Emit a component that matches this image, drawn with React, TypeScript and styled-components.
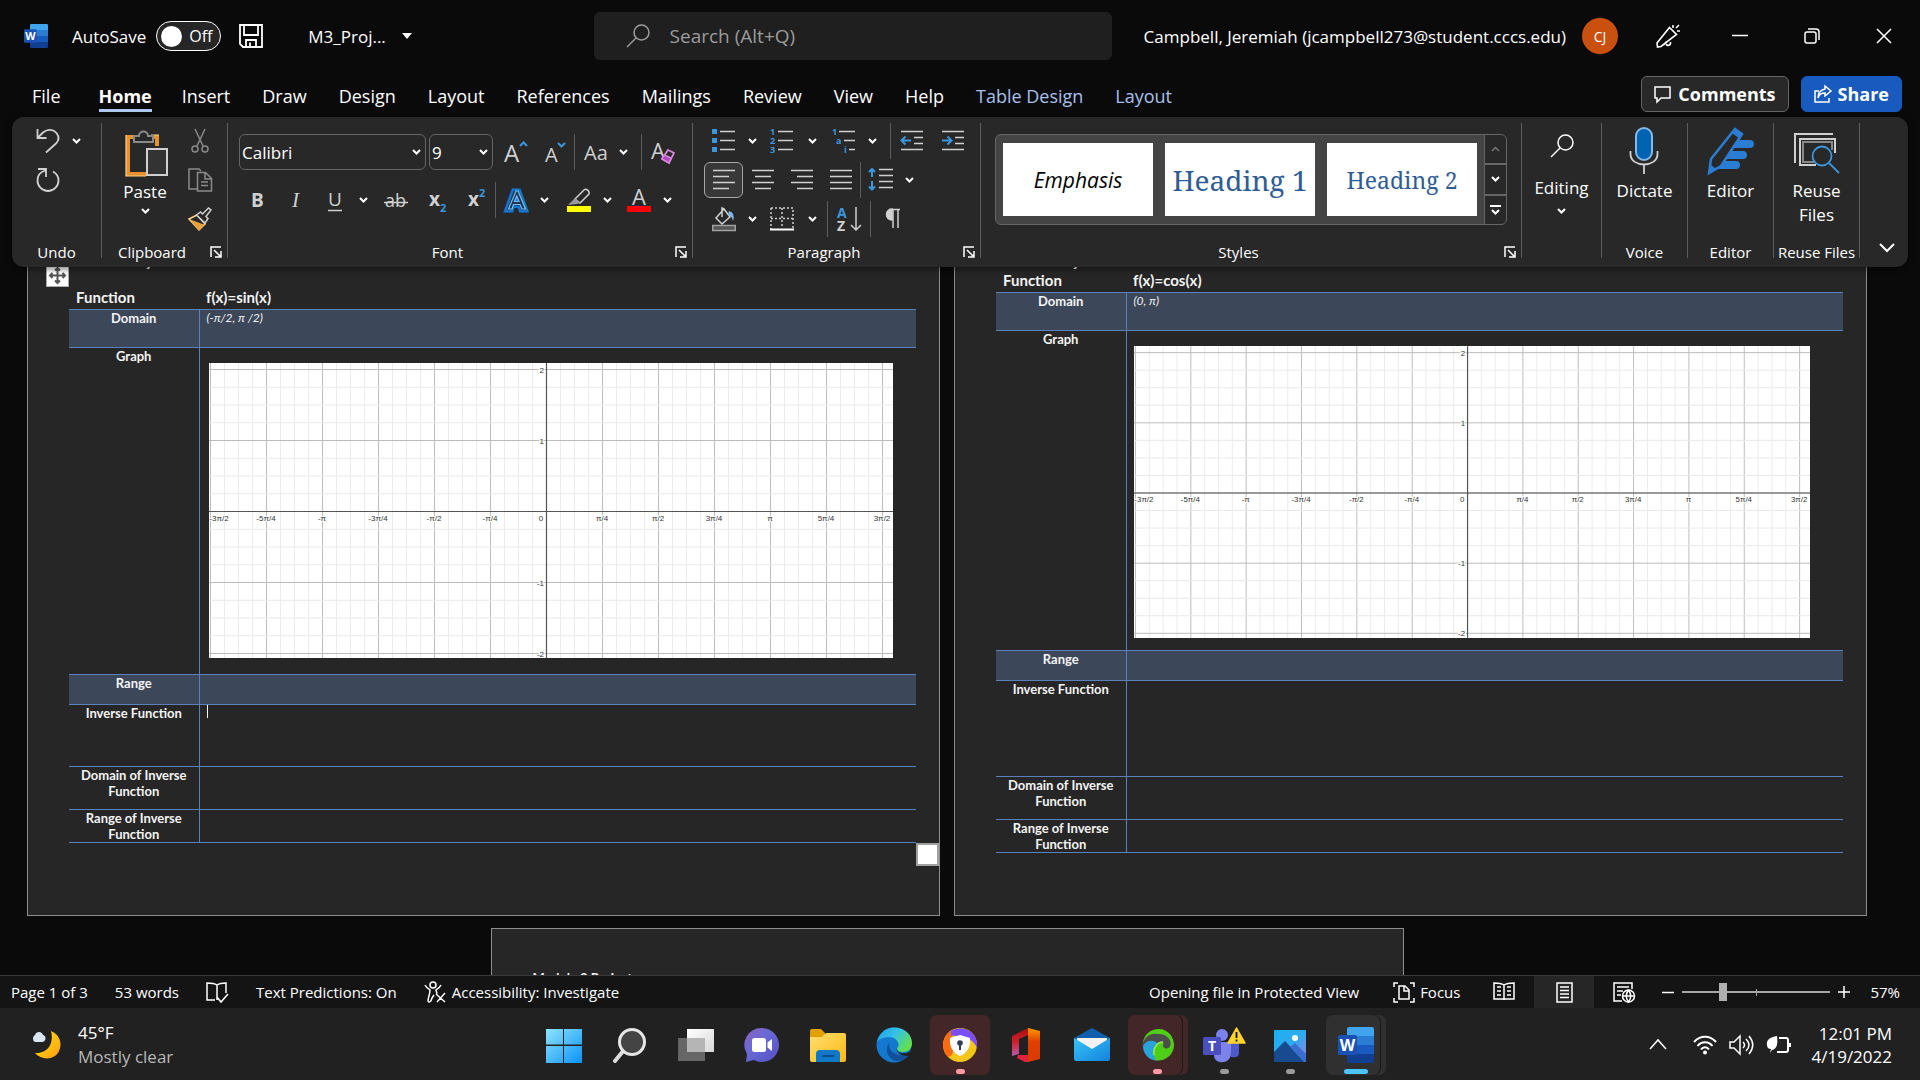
import React from "react";
import styled, { createGlobalStyle, css } from "styled-components";

const GlobalStyle = createGlobalStyle`
  *, *::before, *::after { box-sizing: border-box; }
  html, body { margin: 0; height: 100%; background: #0a0a0a; overflow: hidden; }
  body, button, input, select { font-family: "Open Sans", "Noto Sans", sans-serif; }
  button, input, select { margin: 0; color: inherit; }
`;

/* ---------- shell ---------- */

const Shell = styled.div`
  display: flex;
  flex-direction: column;
  height: 100vh;
  color: #fff;
  background: #0a0a0a;
  font-size: 17px;
`;

const plainButton = css`
  display: inline-flex;
  align-items: center;
  justify-content: center;
  padding: 0;
  border: 0;
  background: transparent;
  color: inherit;
`;

/* ---------- title bar ---------- */

const TitleBar = styled.header`
  display: grid;
  grid-template-columns: minmax(0, 29fr) minmax(0, 518px) minmax(max-content, 40fr);
  column-gap: 32px;
  align-items: center;
  flex: none;
  height: 72px;
`;

const TitleLeft = styled.div`
  display: flex;
  align-items: center;
  padding-left: 24px;
  white-space: nowrap;
`;

const AutoSave = styled.label`
  display: flex;
  align-items: center;
  gap: 10px;
  margin-left: 24px;
`;

const Toggle = styled.button`
  ${plainButton}
  justify-content: flex-start;
  gap: 7px;
  width: 65px;
  height: 30px;
  padding-left: 4px;
  border: 1px solid #fff;
  border-radius: 15px;
  background: #262626;
  font-size: 16px;
  &::before {
    content: "";
    width: 21px;
    height: 21px;
    border-radius: 50%;
    background: #fff;
  }
`;

const BareButton = styled.button`
  ${plainButton}
  height: 36px;
`;

const SaveButton = styled(BareButton)`
  margin: 0 45px 0 18px;
`;

const FileName = styled(BareButton)`
  gap: 16px;
  font-size: 17px;
`;

const SearchBox = styled.label`
  display: flex;
  align-items: center;
  gap: 20px;
  height: 48px;
  padding: 0 32px;
  border-radius: 6px;
  background: #1f1f1f;
  color: #9c9c9c;
`;

const SearchInput = styled.input`
  flex: 1;
  min-width: 0;
  padding: 0;
  border: 0;
  outline: 0;
  background: transparent;
  font-size: 19px;
  &::placeholder { color: #9c9c9c; opacity: 1; }
`;

const TitleRight = styled.div`
  display: flex;
  align-items: center;
  white-space: nowrap;
`;

const Avatar = styled.span`
  display: grid;
  flex: none;
  place-items: center;
  width: 36px;
  height: 36px;
  margin: 0 14px 0 16px;
  border-radius: 50%;
  background: #ca5010;
  font-size: 14px;
`;

const WindowButtons = styled.div`
  display: flex;
  margin-left: auto;
`;

const WindowButton = styled(BareButton)`
  width: 72px;
`;

/* ---------- tabs ---------- */

const TabBar = styled.nav`
  display: flex;
  align-items: flex-start;
  flex: none;
  height: 45px;
  padding: 4px 18px 0 16px;
`;

const Tab = styled.button<{ $active?: boolean; $contextual?: boolean }>`
  ${plainButton}
  height: 36px;
  padding: 3px 16px 0;
  font-size: 18px;
  white-space: nowrap;
  color: ${(p) => (p.$contextual ? "#a9c0ea" : "#fff")};
  ${(p) =>
    p.$active &&
    css`
      margin: 0 14px 0 22px;
      padding: 6px 0 0;
      font-weight: 700;
      border-bottom: 3px solid #aec8f2;
    `}
`;

const TabActions = styled.div`
  display: flex;
  gap: 12px;
  margin-left: auto;
`;

const ActionButton = styled.button<{ $primary?: boolean }>`
  ${plainButton}
  gap: 6px;
  height: 36px;
  padding: 0 12px;
  border: 1px solid ${(p) => (p.$primary ? "#185abd" : "#666")};
  border-radius: 6px;
  background: ${(p) => (p.$primary ? "#185abd" : "#282828")};
  font-size: 18px;
  font-weight: 700;
`;

/* ---------- ribbon ---------- */

const Ribbon = styled.section`
  position: relative;
  z-index: 1;
  display: flex;
  flex: none;
  height: 150px;
  margin: 0 12px;
  padding: 6px 0 9px;
  border-radius: 12px;
  background: #282828;
  box-shadow: 0 2px 6px rgba(0, 0, 0, 0.5);
`;

const Group = styled.div<{ $w?: number }>`
  display: flex;
  flex-direction: column;
  flex: ${(p) => (p.$w ? `0 0 ${p.$w}px` : "1 1 0")};
  min-width: 0;
  border-right: 1px solid #5c5c5c;
`;

const GroupBody = styled.div`
  display: flex;
  flex: 1;
  min-height: 0;
  justify-content: center;
`;

const GroupFooter = styled.div<{ $launch?: boolean }>`
  display: grid;
  grid-template-columns: minmax(0, 1fr) ${(p) => (p.$launch ? "20px" : "")};
  align-items: center;
  justify-items: center;
  height: 12px;
  padding-right: ${(p) => (p.$launch ? 5 : 0)}px;
  font-size: 15px;
  line-height: 12px;
  white-space: nowrap;
`;

const Launcher = styled.button`
  ${plainButton}
  justify-self: end;
  width: 12px;
  height: 12px;
`;

const ToolRows = styled.div`
  display: flex;
  flex-direction: column;
  flex: 1;
  gap: 3px;
`;

const ToolRow = styled.div<{ $start?: number }>`
  display: flex;
  align-items: center;
  height: 36px;
  padding-left: ${(p) => p.$start ?? 11}px;
`;

const Tool = styled.button<{ $w?: number; $on?: boolean; $gap?: number }>`
  ${plainButton}
  flex: none;
  width: ${(p) => p.$w ?? 39}px;
  height: 36px;
  margin-left: ${(p) => p.$gap ?? 0}px;
  color: #d0d0d0;
  ${(p) =>
    p.$on &&
    css`
      border: 1px solid #a6a6a6;
      border-radius: 6px;
      background: #383838;
    `}
`;

const ChevButton = styled.button`
  ${plainButton}
  flex: none;
  width: 18px;
  height: 36px;
`;

const Rule = styled.span<{ $gap?: number }>`
  flex: none;
  width: 1px;
  height: 36px;
  margin-left: ${(p) => p.$gap ?? 0}px;
  background: #5c5c5c;
`;

const FontRows = styled(ToolRows)`
  gap: 12px;
  padding-top: 11px;
`;

const Combo = styled.label<{ $w: number }>`
  position: relative;
  flex: none;
  width: ${(p) => p.$w}px;
  height: 36px;
  margin-right: 3px;
  svg { position: absolute; right: 5px; top: 15px; pointer-events: none; }
`;

const Select = styled.select`
  appearance: none;
  width: 100%;
  height: 100%;
  padding: 0 2px;
  border: 1px solid #666;
  border-radius: 6px;
  background: #282828;
  font-size: 17px;
`;

const PasteButton = styled.button`
  ${plainButton}
  flex-direction: column;
  justify-content: flex-start;
  width: 70px;
  padding-top: 7px;
  font-size: 17px;
  line-height: 24px;
  gap: 4px;
`;

const ClipTools = styled.div`
  display: flex;
  flex-direction: column;
  gap: 3px;
  width: 39px;
`;

const BigTool = styled.button`
  ${plainButton}
  flex-direction: column;
  justify-content: flex-start;
  align-self: flex-start;
  padding-top: 4px;
  font-size: 17px;
  line-height: 24px;
  gap: 4px;
`;

const EditingTool = styled(BigTool)`
  padding-top: 11px;
  gap: 8px;
  svg + span { margin-top: 10px; }
`;

const Gallery = styled.div`
  display: flex;
  flex: 1;
  height: 91px;
  margin: 11px 14px 0;
  border: 1px solid #666;
  border-radius: 6px;
  background: #444;
  overflow: hidden;
`;

const Tiles = styled.div`
  display: grid;
  grid-template-columns: repeat(3, minmax(0, 1fr));
  gap: 12px;
  flex: 1;
  padding: 8px 7px;
`;

const Tile = styled.button<{ $kind: "emphasis" | "h1" | "h2" }>`
  ${plainButton}
  background: #fff;
  white-space: nowrap;
  ${(p) =>
    p.$kind === "emphasis"
      ? css`
          color: #000;
          font: italic 21px "Open Sans", sans-serif;
        `
      : css`
          color: #2f5c94;
          font-family: "Noto Serif", "Liberation Serif", serif;
          font-size: ${p.$kind === "h1" ? 28 : 23}px;
        `}
`;

const GalleryScroll = styled.div`
  display: grid;
  grid-template-rows: repeat(3, 1fr);
  gap: 2px;
  width: 22px;
  border-left: 1px solid #666;
  background: #666;
`;

const ScrollButton = styled.button`
  ${plainButton}
  background: #282828;
`;

const Collapse = styled.button`
  ${plainButton}
  align-self: flex-end;
  width: 48px;
  height: 22px;
  padding-left: 6px;
`;

/* ---------- document ---------- */

const Workspace = styled.main`
  display: flex;
  flex-direction: column;
  flex: 1;
  min-height: 0;
  gap: 12px;
  padding-right: 26px;
  overflow: hidden;
  align-items: center;
  font-family: "Lato", "Open Sans", sans-serif;
  font-size: 13px;
  line-height: 16px;
  color: #f4f4f4;
`;

/* The first spread is scrolled partly under the ribbon. */
const Spread = styled.div`
  display: flex;
  flex: none;
  gap: 14px;
  margin-top: -14px;
`;

const Page = styled.article<{ $last?: boolean }>`
  flex: none;
  width: 913px;
  height: 663px;
  padding: ${(p) => (p.$last ? 40 : 0)}px 23px 0 41px;
  border: 1px solid #8c8c8c;
  border-top-width: ${(p) => (p.$last ? 1 : 0)}px;
  background: #262626;
`;

const PageTitle = styled.h1`
  margin: 0;
  font-size: 13px;
  line-height: 18px;
  font-weight: 700;
`;

const TableWrap = styled.div<{ $gap: number }>`
  position: relative;
  margin-top: ${(p) => p.$gap}px;
`;

const Sheet = styled.table`
  width: 847px;
  table-layout: fixed;
  border-collapse: collapse;
`;

const Row = styled.tr<{ $h: number; $shade?: boolean }>`
  height: ${(p) => p.$h}px;
  background: ${(p) => (p.$shade ? "#3c475a" : "transparent")};
  border-bottom: 1px solid #5a80bd;
`;

const cell = css`
  padding: 0 7px;
  vertical-align: top;
`;

const HeadCell = styled.th<{ $first?: boolean }>`
  ${cell}
  width: ${(p) => (p.$first ? "130px" : "auto")};
  text-align: left;
  font-size: 15px;
  font-weight: 700;
`;

const NameCell = styled.th`
  ${cell}
  text-align: center;
  font-weight: 700;
  border-right: 1px solid #5a80bd;
`;

const DataCell = styled.td`
  ${cell}
  font-size: 12px;
  font-style: italic;
`;

const GraphBox = styled.div<{ $inset: number }>`
  padding: 15px 0 0 ${(p) => p.$inset}px;
  font-style: normal;
  svg { display: block; background: #fff; overflow: hidden; }
`;

const Caret = styled.span`
  display: block;
  width: 1px;
  height: 13px;
  background: #fff;
`;

const MoveHandle = styled.span`
  position: absolute;
  left: -23px;
  top: -25px;
  display: grid;
  place-items: center;
  width: 23px;
  height: 23px;
  border: 1px solid #aaa;
  background: #fff;
`;

const SizeHandle = styled.span`
  position: absolute;
  left: 847px;
  bottom: -23px;
  width: 23px;
  height: 23px;
  border: 2px solid #a0a0a0;
  background: #fff;
`;

/* ---------- status bar ---------- */

const StatusBar = styled.footer`
  display: flex;
  align-items: center;
  flex: none;
  height: 33px;
  padding: 0 20px 0 11px;
  border-top: 1px solid #3a3a3a;
  background: #141414;
  font-size: 15px;
  white-space: nowrap;
`;

const StatusItem = styled.button<{ $gap?: number }>`
  ${plainButton}
  gap: 5px;
  height: 32px;
  margin-right: ${(p) => p.$gap ?? 27}px;
  font-size: 15px;
`;

const Spacer = styled.span`
  flex: 1;
`;

const ViewButton = styled.button<{ $on?: boolean }>`
  ${plainButton}
  width: 60px;
  height: 32px;
  background: ${(p) => (p.$on ? "#262626" : "transparent")};
`;

const ZoomRange = styled.input`
  appearance: none;
  width: 148px;
  height: 18px;
  margin: 0 8px;
  background:
    linear-gradient(#a8a8a8, #a8a8a8) center / 1px 7px no-repeat,
    linear-gradient(#a8a8a8, #a8a8a8) center / 100% 2px no-repeat;
  &::-webkit-slider-thumb {
    appearance: none;
    width: 8px;
    height: 18px;
    background: #b0b0b0;
  }
`;

/* ---------- taskbar ---------- */

const Taskbar = styled.footer`
  display: grid;
  grid-template-columns: 1fr auto 1fr;
  align-items: center;
  flex: none;
  height: 72px;
  padding-top: 1px;
  background: #212121;
`;

const Weather = styled.button`
  ${plainButton}
  justify-self: start;
  gap: 14px;
  padding-left: 30px;
  font-size: 17px;
  line-height: 24px;
  text-align: left;
`;

const Lines = styled.span`
  display: flex;
  flex-direction: column;
`;

const Muted = styled.span`
  color: #b8b8b8;
`;

const Apps = styled.div`
  display: flex;
  gap: 6px;
`;

const AppButton = styled.button<{ $tint?: string; $stack?: boolean; $dot?: string; $wide?: boolean }>`
  ${plainButton}
  position: relative;
  width: ${(p) => (p.$stack ? 54 : 60)}px;
  margin-right: ${(p) => (p.$stack ? 6 : 0)}px;
  padding-left: ${(p) => (p.$stack ? 6 : 0)}px;
  height: 60px;
  border-radius: 7px;
  background: ${(p) => p.$tint ?? "transparent"};
  ${(p) =>
    p.$stack &&
    css`
      box-shadow: 1px 0 0 #191919, 6px 0 0 ${p.$tint};
    `}
  ${(p) =>
    p.$dot &&
    css`
      &::after {
        content: "";
        position: absolute;
        left: 50%;
        bottom: 1px;
        width: ${p.$wide ? 24 : 9}px;
        height: 5px;
        margin-left: ${p.$wide ? -9 : p.$stack ? -2 : -4}px;
        border-radius: 3px;
        background: ${p.$dot};
      }
    `}
`;

const Tray = styled.div`
  display: flex;
  align-items: center;
  justify-self: end;
  gap: 12px;
  padding-right: 28px;
`;

const TrayToggle = styled(BareButton)`
  margin-right: 14px;
`;

const Clock = styled.button`
  ${plainButton}
  margin-left: 8px;
  font-size: 17px;
  line-height: 23px;
  text-align: right;
`;

/* ---------- icons ---------- */

const Drawing = styled.svg`
  flex: none;
  overflow: visible;
`;

const Defs = styled.svg`
  position: absolute;
`;

type IconProps = { w?: number; h?: number; vb?: string; sw?: number; children: React.ReactNode };
const Icon = ({ w = 24, h = 24, vb, sw = 1.5, children }: IconProps) => (
  <Drawing width={w} height={h} viewBox={vb ?? `0 0 ${w} ${h}`} fill="none" stroke="currentColor" strokeWidth={sw} aria-hidden="true">
    {children}
  </Drawing>
);

const BLUE = "#3a96dd";
const FONT = '"Open Sans", "Noto Sans", sans-serif';

const Chev = () => (
  <Icon w={9} h={6} sw={2}>
    <path d="M1 1l3.500 3.500L8 1" stroke="#fff" />
  </Icon>
);

const Chevron = ({ label }: { label: string }) => (
  <ChevButton aria-label={label}>
    <Chev />
  </ChevButton>
);

const LaunchIcon = () => (
  <Icon w={12} h={12} sw={1.5}>
    <path d="M1 11V1h10M4 4l6.500 6.500M11 5v6H5" stroke="#fff" />
  </Icon>
);

const WordIcon = ({ size }: { size: number }) => (
  <svg width={size} height={size} viewBox="0 0 36 36" aria-hidden="true">
    <path d="M9 2a2 2 0 0 1 2-2h23a2 2 0 0 1 2 2v7H9z" fill="#41a5ee" />
    <path d="M9 9h27v9H9z" fill="#2b7cd3" />
    <path d="M9 18h27v9H9z" fill="#185abd" />
    <path d="M9 27h27v7a2 2 0 0 1-2 2H11a2 2 0 0 1-2-2z" fill="#103f91" />
    <rect x="0" y="8" width="19" height="20" rx="1.500" fill="#1a52b3" />
    <text x="9.500" y="24" textAnchor="middle" fontFamily={FONT} fontWeight="700" fontSize="16" fill="#fff">W</text>
  </svg>
);

const SaveIcon = () => (
  <Icon sw={1.8}>
    <path d="M1 1h22v22H4l-3-3zM5 1v10h14V1M7 23v-7h10v7M11 18.500v4.500" stroke="#fff" />
  </Icon>
);

const SearchIcon = () => (
  <Icon>
    <circle cx="15.500" cy="8.500" r="7.500" />
    <path d="M10 14L1 23" />
  </Icon>
);

const PenIcon = () => (
  <Icon sw={1.6}>
    <path d="M13.500 3.500l7 7L5 22.500l-3.500.500L1 19zM7.500 21l3-3.500M10 20c1.500 2.500 5 1.500 4.500-2M17 1v3M23 1l-3 3M21 7h3" stroke="#fff" />
  </Icon>
);

const UndoIcon = () => (
  <Icon sw={1.8}>
    <path d="M1.500 0v9h9M1.500 9l5.500-5.500C12 -.5 17.500.500 20.500 4c3 4 2 8-.5 10.500L10 23.500" />
  </Icon>
);

const RedoIcon = () => (
  <Icon sw={1.8}>
    <path d="M2 1h8v8M9.500 2.500C4 4 1.500 8 1.500 12.500a10.500 10.500 0 0 0 21 0c0-4-2-7-5.500-9" />
  </Icon>
);

const PasteIcon = () => (
  <Icon w={46} h={46} vb="-4 0 46 46">
    <path d="M8 7H2v37h18M25 7h6v9" stroke="#e8912d" strokeWidth="4" />
    <path d="M0 5v41h20M25 5h8" stroke="#fbd58a" strokeWidth="1.200" />
    <path d="M8 12V6h5c0-6 9-6 9 0h5v6z" fill="#282828" stroke="#8a8a8a" strokeWidth="2" />
    <rect x="21" y="19" width="20" height="26" fill="#333" stroke="#d0d0d0" strokeWidth="2" />
  </Icon>
);

const CutIcon = () => (
  <Icon w={18} h={24}>
    <g stroke="#8a8a8a">
      <path d="M4 0l8 17M14 0L6 17" />
      <circle cx="4" cy="20" r="3" />
      <circle cx="14" cy="20" r="3" />
    </g>
  </Icon>
);

const CopyIcon = () => (
  <Icon>
    <g stroke="#8a8a8a">
      <path d="M9 21H1V1h10l2 2" />
      <path d="M9.500 4.500h8l6 6V23h-14zM17 5v6h6M13 14h7M13 17.500h7" />
    </g>
  </Icon>
);

const PainterIcon = () => (
  <Icon>
    <path d="M1 12l8-4 8 9-6 6z" fill="#282828" stroke="#fbd58a" />
    <path d="M4 14l11 4-4 4.500z" fill="#e8a33d" stroke="#e8a33d" />
    <path d="M8.500 8l4-3 2 2 6-6 2.500 2-5 6.500 2 2-3 4.500z" fill="#282828" stroke="#d0d0d0" />
  </Icon>
);

type GlyphProps = { x: number; y: number; size: number; fill?: string; bold?: boolean; italic?: boolean; children: string };
const Glyph = ({ x, y, size, fill = "#d0d0d0", bold, italic, children }: GlyphProps) => (
  <text x={x} y={y} fontSize={size} fill={fill} stroke="none" fontFamily={italic ? '"Liberation Serif", serif' : FONT} fontWeight={bold ? 700 : 400} fontStyle={italic ? "italic" : "normal"}>
    {children}
  </text>
);

const ListIcon = ({ marks }: { marks: "dots" | "numbers" }) => (
  <Icon>
    {marks === "dots" ? (
      <path d="M0 0h5v5H0zM0 9h5v5H0zM0 18h5v5H0z" fill={BLUE} stroke="none" />
    ) : (
      <>
        <Glyph x={0} y={6} size={9} bold fill={BLUE}>1</Glyph>
        <Glyph x={0} y={15} size={9} bold fill={BLUE}>2</Glyph>
        <Glyph x={0} y={24} size={9} bold fill={BLUE}>3</Glyph>
      </>
    )}
    <path d="M8 2.500h15M8 11.500h15M8 20.500h15" />
  </Icon>
);

const MultiIcon = () => (
  <Icon>
    <Glyph x={0} y={6} size={9} bold fill={BLUE}>1</Glyph>
    <Glyph x={4} y={15} size={9} bold fill={BLUE}>a</Glyph>
    <Glyph x={12} y={24} size={9} bold fill={BLUE}>i</Glyph>
    <path d="M7 2.500h16M12 11.500h11M17 20.500h6" />
  </Icon>
);

const IndentIcon = ({ out }: { out?: boolean }) => (
  <Icon>
    <path d="M1 2.500h22M14 8.500h9M14 14.500h9M1 20.500h22" />
    <path d={out ? "M11 11.500H2M5.500 7.500l-4 4 4 4" : "M1 11.500h9M6.500 7.500l4 4-4 4"} stroke={BLUE} strokeWidth="2" />
  </Icon>
);

const AlignIcon = ({ d }: { d: string }) => (
  <Icon sw={1.6}>
    <path d={d} />
  </Icon>
);

const SpacingIcon = () => (
  <Icon w={26}>
    <path d="M11 1.500h14M11 7.500h14M11 13.500h14M11 19.500h14" />
    <path d="M4 1v8M1 4l3-3 3 3M4 13v9M1 18.500l3 3 3-3" stroke={BLUE} strokeWidth="2" />
  </Icon>
);

const BucketIcon = () => (
  <Icon>
    <path d="M4 11L12 2l6 8-8 7z M12 2l-2-1v9" />
    <path d="M17 4c4 1 6 5 4 10-1-4-2-5-5-6z" fill="#7db8ea" stroke="none" />
    <rect x="0.750" y="18.500" width="22.500" height="5" fill="#555" stroke="#a0a0a0" />
  </Icon>
);

const BordersIcon = () => (
  <Icon>
    <path d="M1 1h22v21M1 1v21M12 1v20M1 11.500h22" strokeDasharray="2 2" />
    <path d="M0 22.500h24" stroke="#fff" strokeWidth="2" />
  </Icon>
);

const SortIcon = () => (
  <Icon w={26}>
    <Glyph x={1} y={11} size={14} bold fill={BLUE}>A</Glyph>
    <Glyph x={1} y={24} size={14} bold>Z</Glyph>
    <path d="M20 0v23M15 18l5 5 5-5" />
  </Icon>
);

const MicIcon = () => (
  <Icon w={30} h={48}>
    <rect x="7" y="1" width="16" height="32" rx="8" fill="#0063b1" stroke="#83b9e6" strokeWidth="2" />
    <path d="M1.500 24v3c0 14 27 14 27 0v-3M15 38v9" strokeWidth="1.800" stroke="#d0d0d0" />
  </Icon>
);

const EditorIcon = () => (
  <Icon w={48} h={48}>
    <path d="M31 13h12a4 4 0 0 1 0 8H26zM23 24h13a4 4 0 0 1 0 8H18zM16 34h13a4 4 0 0 1 0 8H11z" fill="#2b7cd3" stroke="none" />
    <path d="M28 2l7 5L14 39 2 46l2-14z" fill="#282828" stroke="#2b7cd3" strokeWidth="2.500" />
    <path d="M28 1l8 6-3 5-8-6zM4 38l5 4-8 5z" fill="#2b7cd3" stroke="none" />
  </Icon>
);

const ReuseIcon = () => (
  <Icon w={46} h={48}>
    <path d="M1 36V7h38" stroke="#d0d0d0" strokeWidth="2" />
    <path d="M22 38H6V12h35v14" stroke="#d0d0d0" strokeWidth="2" />
    <path d="M20 35H9V15h29v8" stroke="#888" strokeWidth="2" />
    <circle cx="28" cy="29" r="9.500" fill="#282828" stroke={BLUE} strokeWidth="1.800" />
    <path d="M35 36l10 10" stroke={BLUE} strokeWidth="1.800" />
  </Icon>
);

/* ---------- document data ---------- */

const X_LABELS = ["-3π/2", "-5π/4", "-π", "-3π/4", "-π/2", "-π/4", "0", "π/4", "π/2", "3π/4", "π", "5π/4", "3π/2"];

/* Empty coordinate grid: 56 units per π/4 across, 71 units per 1 up. */
const Graph = ({ width, height }: { width: number; height: number }) => {
  const cx = 337;
  const cy = 148.5;
  const cols = Array.from({ length: 49 }, (_, i) => i - 24);
  const rows = Array.from({ length: 17 }, (_, i) => i - 8);
  return (
    <svg width={width} height={height} viewBox="0 0 684 295" role="img" aria-label="Empty coordinate grid">
      {cols.map((i) => (
        <line key={`c${i}`} x1={cx + i * 14 + 0.5} x2={cx + i * 14 + 0.5} y1="0" y2="295" stroke={i % 4 ? "#ececec" : "#bcbcbc"} />
      ))}
      {rows.map((i) => (
        <line key={`r${i}`} y1={cy + i * 17.75} y2={cy + i * 17.75} x1="0" x2="684" stroke={i % 4 ? "#e9e9e9" : "#bcbcbc"} />
      ))}
      <path d={`M${cx + 0.5} 0V295M0 ${cy}H684`} stroke="#555" strokeWidth="1.200" />
      <g fontFamily='"Liberation Sans", Arial, sans-serif' fontSize="8" fill="#333" stroke="#fff" strokeWidth="2" paintOrder="stroke">
        {X_LABELS.map((t, i) => (
          <text key={t} x={i === 0 ? 10 : i === 6 ? 332 : Math.min(cx + (i - 6) * 56, 674)} y="158" textAnchor="middle">{t}</text>
        ))}
        {[2, 1, -1, -2].map((n) => (
          <text key={n} x="335" y={cy - n * 71 + 3} textAnchor="end">{n}</text>
        ))}
      </g>
    </svg>
  );
};

type FnProps = { fn: string; domain: string; graph: React.ReactNode; graphRow: number; inverseRow: number; caret?: boolean };
const FunctionTable = ({ fn, domain, graph, graphRow, inverseRow, caret }: FnProps) => (
  <Sheet>
    <thead>
      <Row $h={20}>
        <HeadCell $first scope="col">Function</HeadCell>
        <HeadCell scope="col">{fn}</HeadCell>
      </Row>
    </thead>
    <tbody>
      <Row $h={38} $shade><NameCell scope="row">Domain</NameCell><DataCell>{domain}</DataCell></Row>
      <Row $h={graphRow}><NameCell scope="row">Graph</NameCell><DataCell>{graph}</DataCell></Row>
      <Row $h={30} $shade><NameCell scope="row">Range</NameCell><DataCell /></Row>
      <Row $h={inverseRow}><NameCell scope="row">Inverse Function</NameCell><DataCell>{caret && <Caret />}</DataCell></Row>
      <Row $h={43}><NameCell scope="row">Domain of Inverse Function</NameCell><DataCell /></Row>
      <Row $h={33}><NameCell scope="row">Range of Inverse Function</NameCell><DataCell /></Row>
    </tbody>
  </Sheet>
);

const TABS = ["File", "Home", "Insert", "Draw", "Design", "Layout", "References", "Mailings", "Review", "View", "Help"];

const Footer = ({ text, launch }: { text: string; launch?: boolean }) => (
  <GroupFooter $launch={launch}>
    <span>{text}</span>
    {launch && <Launcher aria-label={`${text} settings`}><LaunchIcon /></Launcher>}
  </GroupFooter>
);

/* ---------- taskbar icons ---------- */

const Big = ({ children }: { children: React.ReactNode }) => (
  <svg width="36" height="36" viewBox="0 0 36 36" aria-hidden="true">{children}</svg>
);

const Gradients = () => (
  <Defs width="0" height="0" aria-hidden="true">
    <defs>
      <linearGradient id="win" x1="0" y1="0" x2="1" y2="1"><stop offset="0" stopColor="#8fe3ff" /><stop offset="1" stopColor="#0a93f5" /></linearGradient>
      <linearGradient id="chat" x1="0" y1="0" x2="1" y2="1"><stop offset="0" stopColor="#8c62b8" /><stop offset=".4" stopColor="#6a6ad6" /><stop offset="1" stopColor="#5350c4" /></linearGradient>
      <linearGradient id="folder" x1="0" y1="0" x2="1" y2="1"><stop offset="0" stopColor="#ffdf73" /><stop offset="1" stopColor="#fdb913" /></linearGradient>
      <linearGradient id="edge" x1="0" y1="0" x2="1" y2=".6"><stop offset="0" stopColor="#1a9fe0" /><stop offset=".5" stopColor="#35c1e8" /><stop offset="1" stopColor="#62e04c" /></linearGradient>
      <linearGradient id="mail" x1="0" y1="0" x2="1" y2="1"><stop offset="0" stopColor="#36c5f7" /><stop offset="1" stopColor="#1382dd" /></linearGradient>
      <linearGradient id="office" x1="0" y1="0" x2="0" y2="1"><stop offset="0" stopColor="#a80f0f" /><stop offset=".5" stopColor="#d0202c" /><stop offset="1" stopColor="#b65bb0" /></linearGradient>
      <linearGradient id="office2" x1="0" y1="0" x2="0" y2="1"><stop offset="0" stopColor="#ff9a00" /><stop offset=".4" stopColor="#e04000" /><stop offset="1" stopColor="#d83b01" /></linearGradient>
      <linearGradient id="moon" x1="0" y1="0" x2="1" y2="1"><stop offset="0" stopColor="#ffe900" /><stop offset="1" stopColor="#ff9d1c" /></linearGradient>
      <linearGradient id="photo" x1="0" y1="0" x2="1" y2="1"><stop offset="0" stopColor="#1cb0f0" /><stop offset=".5" stopColor="#2eaaf0" /><stop offset="1" stopColor="#a07ae0" /></linearGradient>
      <linearGradient id="view" x1="0" y1="0" x2="1" y2="1"><stop offset="0" stopColor="#fff" /><stop offset="1" stopColor="#d8d8d8" /></linearGradient>
    </defs>
  </Defs>
);

const MoonIcon = () => (
  <Icon w={34} h={34}>
    <path d="M21 3c8 3 12 12 8 20-4 9-17 10-24 2 9 1 20-6 16-22z" fill="url(#moon)" stroke="none" />
    <path d="M5 14a4 4 0 0 1 0-7c1-4 7-4 8 0 4 1 3 7-1 7z" fill="#d7e8f4" stroke="none" />
  </Icon>
);

const StartIcon = () => <Big><path d="M0 2h17v15.500H0zM18 2h18v15.500H18zM0 19h17v17H0zM18 19h18v17H18z" fill="url(#win)" /></Big>;
const FindIcon = () => (
  <Big>
    <path d="M12 23L3 34" stroke="#ddd" strokeWidth="4" strokeLinecap="round" />
    <circle cx="20" cy="15" r="12.500" fill="#444" stroke="#e6e6e6" strokeWidth="3" />
  </Big>
);
const TaskViewIcon = () => <Big><path d="M0 11h27v23H0z" fill="#666" /><path d="M9 2h27v23H9z" fill="url(#view)" /><path d="M9 11h18v14H9z" fill="#b5b5b5" /></Big>;
const ChatIcon = () => (
  <Big>
    <path d="M18 1a17 17 0 1 1-8 32l-8 2 1-8A17 17 0 0 1 18 1z" fill="url(#chat)" />
    <rect x="8" y="11" width="14" height="14" rx="2.500" fill="#fff" />
    <path d="M23.500 15.500L28 12v12l-4.500-3.500z" fill="#fff" />
  </Big>
);
const FolderIcon = () => (
  <Big>
    <path d="M0 4a2 2 0 0 1 2-2h9l4 4v5H0z" fill="#e2a100" />
    <path d="M0 10l12 0 4-4h18a2 2 0 0 1 2 2v25a2 2 0 0 1-2 2H2a2 2 0 0 1-2-2z" fill="url(#folder)" />
    <path d="M6 35V27a4 4 0 0 1 4-4h16a4 4 0 0 1 4 4v8z" fill="#0f78c8" />
    <path d="M12 29h12" stroke="#0a4d88" strokeWidth="2" />
  </Big>
);
const EdgeIcon = () => (
  <Big>
    <circle cx="18" cy="18" r="17.500" fill="#1279cf" />
    <path d="M1 15C3 6 10 .5 18 .5 29 .5 36 8 36 16c0 6-4 9-9 9-6 0-7-3-5-5 2-3-1-10-9-10C7 10 2 13 1 15z" fill="url(#edge)" />
    <path d="M13 16c-5 6-1 17 8 18 6 0 11-3 13-8-9 5-22 1-21-10z" fill="#12509a" />
    <path d="M21 21c-1 5 8 8 15 2v6c-3-1-7 1-12-2-3-2-4-4-3-6z" fill="#212121" />
  </Big>
);
const ShieldIcon = () => (
  <Big>
    <circle cx="18" cy="18" r="17" fill="#f5c518" />
    <path d="M6 30A17 17 0 0 1 10 3c3 3-4 9 0 17 2 5 1 8-4 10z" fill="#ff6a13" />
    <path d="M9 4a17 17 0 0 1 26 17C31 12 22 8 9 9z" fill="#7a4dff" />
    <path d="M8 11l10-3 10 3c1 9-3 15-10 18-7-3-11-9-10-18z" fill="#fff" />
    <circle cx="18" cy="16" r="2.800" fill="#333a56" /><path d="M17 17h2v6h-2z" fill="#333a56" />
  </Big>
);
const OfficeIcon = () => (
  <Big>
    <path d="M4 9L20 1v7l-9 4v15l-7 2z" fill="url(#office)" />
    <path d="M20 1l12 3v28l-12 3z" fill="url(#office2)" />
    <path d="M10 28h10v7l-3 0-8-4z" fill="#e0223c" />
  </Big>
);
const MailIcon = () => (
  <Big>
    <path d="M0 11L18 1l18 10v4H0z" fill="#0f5fae" /><path d="M3 11h30v12H3z" fill="#f2f2f2" />
    <path d="M0 11l18 11 18-11v21a2 2 0 0 1-2 2H2a2 2 0 0 1-2-2z" fill="url(#mail)" />
  </Big>
);
const SwirlIcon = () => (
  <Big>
    <circle cx="18" cy="18" r="15.500" fill="#4c4c4c" />
    <path d="M3 19c3-6 11-7 15-2l-2 16.500C8 33 3 26 3 19z" fill="#29a3dc" />
    <path d="M16 33.500c-5-9 0-18 8-18-3 4 2 9 6 4C33 13 26 6 17 7 10 6 5 10 3 16 4 7 11 2 19 2c9 0 15 8 15 16 0 10-9 16.500-18 15.500z" fill="#4fce17" />
    <path d="M14 28c-1-7 3-13 9-13" fill="none" stroke="#9bf04a" strokeWidth="1.500" />
  </Big>
);
const TeamsIcon = () => (
  <svg width="44" height="36" viewBox="0 0 44 36" aria-hidden="true">
    <circle cx="20" cy="8" r="6" fill="#7b83eb" />
    <path d="M29 15h8v11c0 4-4 5-8 4z" fill="#5059c9" />
    <path d="M14 15h15v11c0 12-17 12-17 2z" fill="#7b83eb" />
    <rect x="1" y="10" width="18" height="18" rx="1.500" fill="#4a4fbd" />
    <text x="10" y="24" textAnchor="middle" fontFamily={FONT} fontWeight="700" fontSize="14" fill="#fff">T</text>
    <path d="M34.500 1L43 16H26z" fill="#ffd52b" stroke="#ffd52b" strokeWidth="1.500" strokeLinejoin="round" />
    <path d="M34.500 5v6M34.500 12.500v2" stroke="#111" strokeWidth="1.800" />
  </svg>
);
const PhotosIcon = () => (
  <Big>
    <rect x="2" y="3" width="32" height="32" rx="1" fill="url(#photo)" />
    <path d="M2 25l11-11 20 21H2z" fill="#174a8e" /><path d="M18 20l5-4 11 11v8h-2z" fill="#3a6fd0" />
    <circle cx="23" cy="11" r="3" fill="#fff" />
  </Big>
);

export default function App() {
  return (
    <Shell>
      <GlobalStyle />
      <Gradients />

      <TitleBar>
        <TitleLeft>
          <WordIcon size={24} />
          <AutoSave htmlFor="autosave">
            AutoSave
            <Toggle id="autosave" role="switch" aria-checked="false">Off</Toggle>
          </AutoSave>
          <SaveButton aria-label="Save"><SaveIcon /></SaveButton>
          <FileName>
            M3_Proj...
            <Icon w={10} h={6}><path d="M0 0h10L5 6z" fill="#fff" stroke="none" /></Icon>
          </FileName>
        </TitleLeft>
        <SearchBox htmlFor="search">
          <SearchIcon />
          <SearchInput id="search" placeholder="Search (Alt+Q)" aria-label="Search" />
        </SearchBox>
        <TitleRight>
          <span>Campbell, Jeremiah (jcampbell273@student.cccs.edu)</span>
          <Avatar>CJ</Avatar>
          <WindowButtons>
            <WindowButton aria-label="Coming soon"><PenIcon /></WindowButton>
            <WindowButton aria-label="Minimize"><Icon w={16} h={16}><path d="M0 7.500h16" stroke="#fff" /></Icon></WindowButton>
            <WindowButton aria-label="Restore">
              <Icon w={16} h={16}><rect x="1" y="4" width="11" height="11" rx="2" stroke="#fff" /><path d="M4 1h8c2 0 3 1 3 3v8" stroke="#fff" /></Icon>
            </WindowButton>
            <WindowButton aria-label="Close"><Icon w={16} h={16}><path d="M1 1l14 14M15 1L1 15" stroke="#fff" /></Icon></WindowButton>
          </WindowButtons>
        </TitleRight>
      </TitleBar>

      <TabBar>
        {TABS.map((t) => <Tab key={t} $active={t === "Home"}>{t}</Tab>)}
        <Tab $contextual>Table Design</Tab>
        <Tab $contextual>Layout</Tab>
        <TabActions>
          <ActionButton>
            <Icon w={18} h={17}><path d="M1 1h15v11H7l-4 4v-4H1z" stroke="#fff" /></Icon>
            Comments
          </ActionButton>
          <ActionButton $primary>
            <Icon w={18} h={18}><path d="M5 6H1v11h14v-4M11 1l6 5-6 5V8C8 8 5 9 4 13c0-5 3-8 7-9z" stroke="#fff" /></Icon>
            Share
          </ActionButton>
        </TabActions>
      </TabBar>

      <Ribbon>
        <Group $w={90}>
          <GroupBody>
            <ToolRows>
              <ToolRow $start={16}><Tool aria-label="Undo"><UndoIcon /></Tool><Chevron label="Undo list" /></ToolRow>
              <ToolRow $start={16}><Tool aria-label="Redo"><RedoIcon /></Tool></ToolRow>
            </ToolRows>
          </GroupBody>
          <Footer text="Undo" />
        </Group>

        <Group $w={126}>
          <GroupBody>
            <PasteButton><PasteIcon /><span>Paste</span><Chev /></PasteButton>
            <ClipTools>
              <Tool aria-label="Cut"><CutIcon /></Tool>
              <Tool aria-label="Copy"><CopyIcon /></Tool>
              <Tool aria-label="Format Painter"><PainterIcon /></Tool>
            </ClipTools>
          </GroupBody>
          <Footer text="Clipboard" launch />
        </Group>

        <Group $w={465}>
          <GroupBody>
            <FontRows>
              <ToolRow>
                <Combo $w={187}><Select aria-label="Font"><option>Calibri</option></Select><Chev /></Combo>
                <Combo $w={64}><Select aria-label="Font size"><option>9</option></Select><Chev /></Combo>
                <Tool aria-label="Grow font"><Icon><Glyph x={0} y={22} size={24}>A</Glyph><path d="M16 6l3.500-3.500L23 6" stroke={BLUE} strokeWidth="2" /></Icon></Tool>
                <Tool aria-label="Shrink font"><Icon><Glyph x={2} y={22} size={20}>A</Glyph><path d="M15 3l3.500 3.500L22 3" stroke={BLUE} strokeWidth="2" /></Icon></Tool>
                <Rule />
                <Tool aria-label="Change case"><Icon w={28}><Glyph x={3} y={20} size={20}>Aa</Glyph></Icon></Tool>
                <Chevron label="Change case options" />
                <Rule $gap={9} />
                <Tool $w={42} aria-label="Clear formatting">
                  <Icon><Glyph x={0} y={19} size={22}>A</Glyph><path d="M17 10l6 3-5 10-7-4z" fill="#282828" stroke="#d586d5" strokeWidth="1.800" /><path d="M13 15l7 3-2 5-7-4z" fill="#b146c2" stroke="#d586d5" /></Icon>
                </Tool>
              </ToolRow>
              <ToolRow $start={9}>
                <Tool aria-label="Bold"><Icon><Glyph x={6} y={19} size={19} bold>B</Glyph></Icon></Tool>
                <Tool aria-label="Italic"><Icon><Glyph x={8} y={19} size={21} italic>I</Glyph></Icon></Tool>
                <Tool aria-label="Underline"><Icon><Glyph x={5} y={18} size={19}>U</Glyph><path d="M5 22.500h14" /></Icon></Tool>
                <Chevron label="Underline style" />
                <Tool $w={42} $gap={3} aria-label="Strikethrough"><Icon><Glyph x={1} y={19} size={18}>ab</Glyph><path d="M0 14.500h24" /></Icon></Tool>
                <Tool $w={42} aria-label="Subscript"><Icon><Glyph x={3} y={18} size={19} bold>x</Glyph><Glyph x={14} y={24} size={11} bold fill={BLUE}>2</Glyph></Icon></Tool>
                <Tool $w={36} aria-label="Superscript"><Icon><Glyph x={3} y={18} size={19} bold>x</Glyph><Glyph x={14} y={9} size={11} bold fill={BLUE}>2</Glyph></Icon></Tool>
                <Rule />
                <Tool $w={36} $gap={3} aria-label="Text effects">
                  <Icon w={26}><text x="3" y="22" fontSize="27" fontWeight="700" fontFamily={FONT} fill="#1b3654" stroke="#1475cf" strokeWidth="5" paintOrder="stroke">A</text><path d="M4.500 21L12 3h2l7.500 18h-3.500l-2-4.500H9.500L8 21zM10.500 13.500h4.500L12.800 8z" stroke="#7dbcf0" strokeWidth="1.200" /></Icon>
                </Tool>
                <Chevron label="Text effects options" />
                <Tool $gap={6} aria-label="Highlight colour">
                  <Icon><path d="M8 11l9-9c2-2 6 1 5 4l-9 9z" /><path d="M8 10l5 5-3 1-9 1z" fill="#999" stroke="none" /><path d="M0 18h24v6H0z" fill="#ff0" stroke="none" /></Icon>
                </Tool>
                <Chevron label="Highlight colours" />
                <Tool $gap={3} aria-label="Font colour"><Icon><Glyph x={5} y={17} size={22}>A</Glyph><path d="M0 18h24v6H0z" fill="#f00" stroke="none" /></Icon></Tool>
                <Chevron label="Font colours" />
              </ToolRow>
            </FontRows>
          </GroupBody>
          <Footer text="Font" launch />
        </Group>

        <Group $w={288}>
          <GroupBody>
            <ToolRows>
              <ToolRow>
                <Tool aria-label="Bullets"><ListIcon marks="dots" /></Tool><Chevron label="Bullet library" />
                <Tool $w={42} aria-label="Numbering"><ListIcon marks="numbers" /></Tool><Chevron label="Numbering library" />
                <Tool $gap={3} aria-label="Multilevel list"><MultiIcon /></Tool><Chevron label="List library" />
                <Rule $gap={9} />
                <Tool $w={42} aria-label="Decrease indent"><IndentIcon out /></Tool>
                <Tool aria-label="Increase indent"><IndentIcon /></Tool>
              </ToolRow>
              <ToolRow>
                <Tool $on aria-label="Align left"><AlignIcon d="M1 2.500h22M1 8.500h16M1 14.500h22M1 20.500h16" /></Tool>
                <Tool aria-label="Center"><AlignIcon d="M1 2.500h22M4 8.500h16M1 14.500h22M4 20.500h16" /></Tool>
                <Tool aria-label="Align right"><AlignIcon d="M1 2.500h22M7 8.500h16M1 14.500h22M7 20.500h16" /></Tool>
                <Tool aria-label="Justify"><AlignIcon d="M1 2.500h22M1 8.500h22M1 14.500h22M1 20.500h22" /></Tool>
                <Rule />
                <Tool aria-label="Line spacing"><SpacingIcon /></Tool><Chevron label="Spacing options" />
              </ToolRow>
              <ToolRow>
                <Tool aria-label="Shading"><BucketIcon /></Tool><Chevron label="Shading colours" />
                <Tool $w={42} aria-label="Borders"><BordersIcon /></Tool><Chevron label="Border options" />
                <Rule $gap={6} />
                <Tool $w={42} aria-label="Sort"><SortIcon /></Tool>
                <Rule />
                <Tool $w={42} aria-label="Show marks"><Icon><path d="M13 2v19M18 2v19M20 2.500H9" /><path d="M12 2a5.500 5.500 0 1 0 0 11z" fill="#d0d0d0" stroke="#d0d0d0" /></Icon></Tool>
              </ToolRow>
            </ToolRows>
          </GroupBody>
          <Footer text="Paragraph" launch />
        </Group>

        <Group>
          <GroupBody>
            <Gallery>
              <Tiles>
                <Tile $kind="emphasis">Emphasis</Tile>
                <Tile $kind="h1">Heading 1</Tile>
                <Tile $kind="h2">Heading 2</Tile>
              </Tiles>
              <GalleryScroll>
                <ScrollButton aria-label="Previous styles"><Icon w={9} h={6}><path d="M1 5l3.500-3.500L8 5" stroke="#777" /></Icon></ScrollButton>
                <ScrollButton aria-label="Next styles"><Chev /></ScrollButton>
                <ScrollButton aria-label="All styles"><Icon w={11} h={10} sw={2}><path d="M0 1h11M2 5l3.500 3.500L9 5" stroke="#fff" /></Icon></ScrollButton>
              </GalleryScroll>
            </Gallery>
          </GroupBody>
          <Footer text="Styles" launch />
        </Group>

        <Group $w={80}>
          <GroupBody><EditingTool><SearchIcon /><span>Editing</span><Chev /></EditingTool></GroupBody>
        </Group>
        <Group $w={86}>
          <GroupBody><BigTool><MicIcon /><span>Dictate</span></BigTool></GroupBody>
          <Footer text="Voice" />
        </Group>
        <Group $w={86}>
          <GroupBody><BigTool><EditorIcon /><span>Editor</span></BigTool></GroupBody>
          <Footer text="Editor" />
        </Group>
        <Group $w={86}>
          <GroupBody><BigTool><ReuseIcon /><span>Reuse<br />Files</span></BigTool></GroupBody>
          <Footer text="Reuse Files" />
        </Group>
        <Collapse aria-label="Collapse ribbon"><Icon w={16} h={9} sw={2}><path d="M1 1l7 7 7-7" stroke="#fff" /></Icon></Collapse>
      </Ribbon>

      <Workspace>
        <Spread>
          <Page>
            <PageTitle>Module 3 Project</PageTitle>
            <TableWrap $gap={18}>
              <MoveHandle>
                <Icon w={17} h={17} sw={2}><path d="M8.500 1v15M1 8.500h15M6 3.500L8.500 1 11 3.500M6 13.500L8.500 16l2.500-2.500M3.500 6L1 8.500 3.500 11M13.500 6L16 8.500 13.500 11" stroke="#555" /></Icon>
              </MoveHandle>
              <FunctionTable fn="f(x)=sin(x)" domain="(-π/2, π /2)" graphRow={327} inverseRow={62} caret graph={<GraphBox $inset={2}><Graph width={684} height={295} /></GraphBox>} />
              <SizeHandle />
            </TableWrap>
          </Page>
          <Page>
            <PageTitle>Module 3 Project</PageTitle>
            <TableWrap $gap={1}>
              <FunctionTable fn="f(x)=cos(x)" domain="(0, π)" graphRow={320} inverseRow={96} graph={<GraphBox $inset={0}><Graph width={676} height={292} /></GraphBox>} />
            </TableWrap>
          </Page>
        </Spread>
        <Page $last>
          <PageTitle>Module 3 Project</PageTitle>
        </Page>
      </Workspace>

      <StatusBar>
        <StatusItem>Page 1 of 3</StatusItem>
        <StatusItem>53 words</StatusItem>
        <StatusItem aria-label="Proofing">
          <Icon w={23} h={21}><path d="M11 3v15M11 3C8 1 4 1 1 1v17h8M11 3c3-2 6-2 9-2v10M11 15l4 5 7-8" stroke="#fff" /></Icon>
        </StatusItem>
        <StatusItem>Text Predictions: On</StatusItem>
        <StatusItem>
          <Icon w={23} h={22}><circle cx="9" cy="4" r="3" stroke="#fff" /><path d="M1 4c2 4 5 4 5 5 0 4-2 8-2 11 1 2 3 1 4-3l2-3M17 4c-2 4-5 4-5 5l1 4M12 13l9 8M21 12l-8 9" stroke="#fff" /></Icon>
          Accessibility: Investigate
        </StatusItem>
        <Spacer />
        <StatusItem $gap={34}>Opening file in Protected View</StatusItem>
        <StatusItem $gap={14}>
          <Icon w={22} h={21}><path d="M5 1H1v4M17 1h4v4M1 16v4h4M21 16v4h-4M6 4h6l4 4v9H6zM11 4v5h5" stroke="#fff" /></Icon>
          Focus
        </StatusItem>
        <ViewButton aria-label="Read mode"><Icon w={22} h={20}><path d="M11 3v15M11 3C8 1 4 1 1 1v16h10h10V1c-3 0-7 0-10 2M4 5h4M4 9h4M4 13h4M14 5h4M14 9h4M14 13h4" stroke="#fff" /></Icon></ViewButton>
        <ViewButton $on aria-label="Print layout"><Icon w={17} h={21}><path d="M1 1h15v19H1zM4 5h9M4 8.500h9M4 12h9M4 15.500h9" stroke="#fff" /></Icon></ViewButton>
        <ViewButton aria-label="Web layout"><Icon w={23} h={21}><path d="M9 19H1V1h18v6M4 5h12M4 9h6M4 13h4" stroke="#fff" /><circle cx="15.500" cy="14" r="6" stroke="#fff" /><path d="M9.500 14h12M15.500 8c-3 4-3 8 0 12 3-4 3-8 0-12" stroke="#fff" /></Icon></ViewButton>
        <BareButton aria-label="Zoom out"><Icon w={20} h={13}><path d="M8 6.500h12" stroke="#fff" /></Icon></BareButton>
        <ZoomRange type="range" aria-label="Zoom" min={0} max={100} defaultValue={26} />
        <StatusItem $gap={20} aria-label="Zoom in"><Icon w={12} h={12}><path d="M0 6h12M6 0v12" stroke="#fff" /></Icon></StatusItem>
        <span>57%</span>
      </StatusBar>

      <Taskbar>
        <Weather>
          <MoonIcon />
          <Lines><span>45°F</span><Muted>Mostly clear</Muted></Lines>
        </Weather>
        <Apps>
          <AppButton aria-label="Start"><StartIcon /></AppButton>
          <AppButton aria-label="Search"><FindIcon /></AppButton>
          <AppButton aria-label="Task view"><TaskViewIcon /></AppButton>
          <AppButton aria-label="Chat"><ChatIcon /></AppButton>
          <AppButton aria-label="File Explorer"><FolderIcon /></AppButton>
          <AppButton aria-label="Edge"><EdgeIcon /></AppButton>
          <AppButton aria-label="Secure browser" $tint="#432627" $dot="#ff9aa8"><ShieldIcon /></AppButton>
          <AppButton aria-label="Office"><OfficeIcon /></AppButton>
          <AppButton aria-label="Mail"><MailIcon /></AppButton>
          <AppButton aria-label="Web security" $tint="#432627" $stack $dot="#ff9aa8"><SwirlIcon /></AppButton>
          <AppButton aria-label="Teams" $dot="#9a9a9a"><TeamsIcon /></AppButton>
          <AppButton aria-label="Photos" $dot="#9a9a9a"><PhotosIcon /></AppButton>
          <AppButton aria-label="Word" $tint="#303030" $stack $wide $dot="#4cc2ff"><WordIcon size={36} /></AppButton>
        </Apps>
        <Tray>
          <TrayToggle aria-label="Hidden icons"><Icon w={18} h={11}><path d="M1 10l8-9 8 9" stroke="#fff" /></Icon></TrayToggle>
          <Icon w={24} h={20} sw={2}><path d="M1 7c6-7 16-7 22 0M4.500 11c4-5 11-5 15 0M8 14.500c2-3 6-3 8 0" stroke="#fff" /><circle cx="12" cy="17.500" r="2" fill="#fff" stroke="none" /></Icon>
          <Icon w={25} h={20}><path d="M1 7h4l6-6v18l-6-6H1zM14 7c2 2 2 4 0 6M17 4c4 4 4 8 0 12M20 1c5 6 5 12 0 18" stroke="#fff" /></Icon>
          <Icon w={25} h={20}><path d="M13 3h7c1.500 0 2 .5 2 2v10c0 1.500-.5 2-2 2h-9M24 8v4" stroke="#fff" strokeWidth="2" /><path d="M11 1C4 2 0 5 1 10c0 3 2 4 4 4l-1 4 2-3c5-1 6-6 5-14z" fill="#fff" stroke="none" /></Icon>
          <Clock><Lines><span>12:01 PM</span><span>4/19/2022</span></Lines></Clock>
        </Tray>
      </Taskbar>
    </Shell>
  );
}
